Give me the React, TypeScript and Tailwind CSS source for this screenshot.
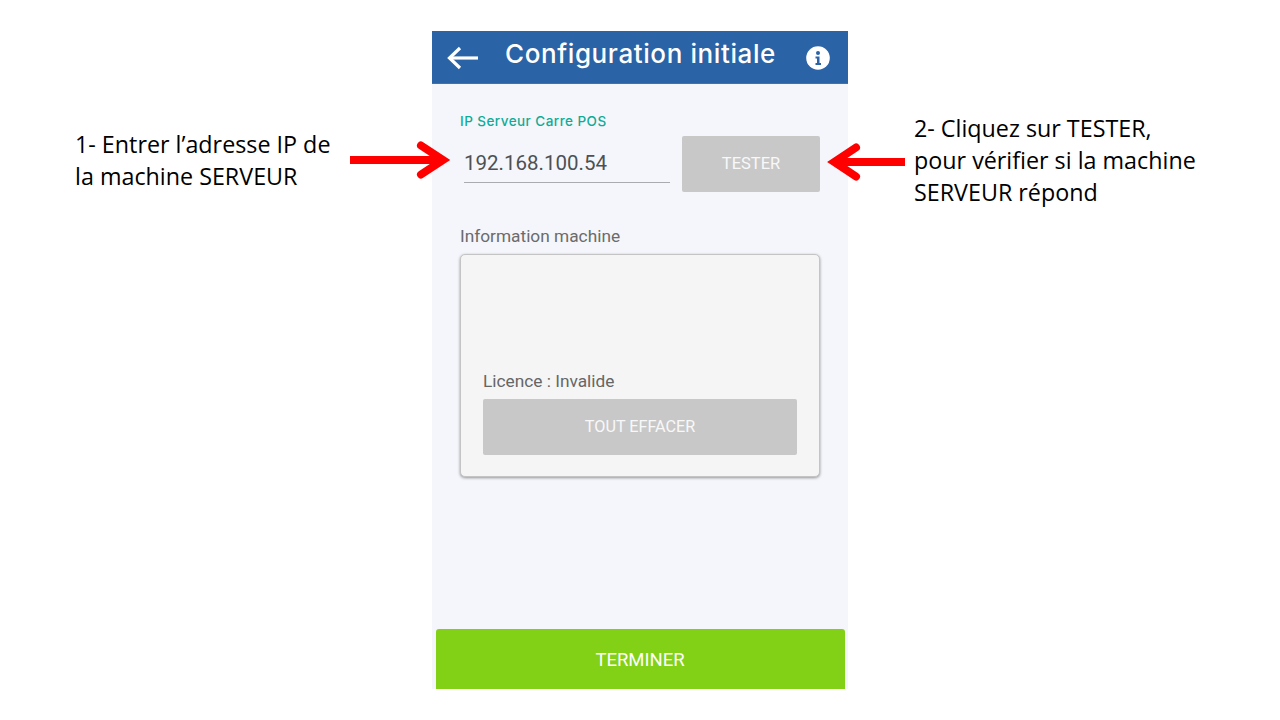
export default function App() {
  return (
    <div className="relative flex h-[720px] w-[1280px] overflow-hidden bg-white font-['Roboto',sans-serif]">
      <div className="w-[432px] pl-[75px] pt-[128px] font-['Open_Sans',sans-serif] text-[23.3px] leading-[32px] text-black">
        <p className="whitespace-nowrap">1- Entrer l’adresse IP de</p>
        <p className="whitespace-nowrap">la machine SERVEUR</p>
      </div>

      <div className="mt-[31px] flex h-[658px] w-[416px] flex-col bg-[#f4f6fb]">
        <header className="flex h-[53px] shrink-0 items-center border-b border-[#3a74b4] bg-[#2a63a6] pl-[15px] pr-[18px] text-white">
          <svg width="31" height="24" viewBox="0 0 31 24" fill="none" stroke="white" strokeWidth="3.2" className="mt-[2px]">
            <path d="M31 12H3" />
            <path d="M13 2 2.5 12 13 22" />
          </svg>
          <h1 className="ml-[27px] -mt-[6px] flex-1 whitespace-nowrap font-['Inter',sans-serif] text-[26px] font-medium leading-[32px] tracking-[0.6px]">Configuration initiale</h1>
          <svg width="24" height="24" viewBox="0 0 24 24" className="mt-[2px]">
            <circle cx="12" cy="12" r="11.8" fill="white" />
            <circle cx="12" cy="7" r="2" fill="#2a63a6" />
            <path d="M9.5 10.5H13.5V17H15V19H9.5V17H11V12.5H9.5Z" fill="#2a63a6" />
          </svg>
        </header>

        <main className="flex flex-1 flex-col px-[28px]">
          <div className="mt-[29px] whitespace-nowrap font-['Inter',sans-serif] text-[13.5px] font-medium leading-[16px] tracking-[0.45px] text-[#0fab97]">IP Serveur Carre POS</div>
          <div className="mt-[7px] flex items-start">
            <div className="ml-[4px] flex h-[47px] w-[206px] items-center border-b border-[#a9abaf] pt-[9px] text-[20.5px] text-[#4f5052]">192.168.100.54</div>
            <button className="ml-[12px] h-[56px] w-[138px] rounded-[2px] bg-[#c8c8c8] pt-[1px] text-[16.5px] text-[#f8f8f8]">TESTER</button>
          </div>
          <div className="mt-[32px] text-[17.3px] leading-[24px] text-[#6b6b6b]">Information machine</div>
          <section className="mt-[6px] flex h-[223px] flex-col justify-end rounded-[5px] border border-[#c4c4c4] bg-[#f5f5f5] px-[22px] pb-[21px] shadow-[0_1px_3px_rgba(0,0,0,0.4)]">
            <div className="text-[17.3px] leading-[24px] text-[#666666]">Licence : Invalide</div>
            <button className="mt-[6px] h-[56px] rounded-[2px] bg-[#c8c8c8] pt-[1px] text-[16.2px] text-[#f8f8f8]">TOUT EFFACER</button>
          </section>
          <div className="flex-1" />
        </main>

        <div className="px-[3.5px]">
          <button className="block h-[60px] w-full rounded-t-[3px] bg-[#82d116] pt-[4px] text-[18.5px] text-white">TERMINER</button>
        </div>
      </div>

      <div className="flex-1 pl-[66px] pt-[112px] font-['Open_Sans',sans-serif] text-[23.3px] leading-[32px] text-black">
        <p className="whitespace-nowrap">2- Cliquez sur TESTER,</p>
        <p className="whitespace-nowrap">pour vérifier si la machine</p>
        <p className="whitespace-nowrap">SERVEUR répond</p>
      </div>

      <svg width="102" height="40" viewBox="0 0 102 40" className="absolute left-[349px] top-[140px]" fill="none">
        <path d="M1 20H92" stroke="#ff0000" strokeWidth="8" />
        <path d="M72 5.5 94 20 72 34.5" stroke="#ff0000" strokeWidth="8" strokeLinecap="round" />
      </svg>
      <svg width="82" height="40" viewBox="0 0 82 40" className="absolute left-[824px] top-[142px]" fill="none">
        <path d="M81 20H12" stroke="#ff0000" strokeWidth="8" />
        <path d="M32 5.5 10.3 20 32 34.5" stroke="#ff0000" strokeWidth="8" strokeLinecap="round" />
      </svg>
    </div>
  );
}
